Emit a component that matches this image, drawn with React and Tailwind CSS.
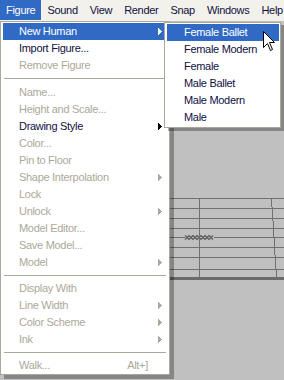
import React from "react";

const DIS = "#ACA899";
const INK = "#10103f";

const mainItems = [
  { label: "New Human", sub: true, active: true },
  { label: "Import Figure..." },
  { label: "Remove Figure", disabled: true },
  { sep: "h-[10px]" },
  { label: "Name...", disabled: true },
  { label: "Height and Scale...", disabled: true },
  { label: "Drawing Style", sub: true },
  { label: "Color...", disabled: true },
  { label: "Pin to Floor", disabled: true },
  { label: "Shape Interpolation", disabled: true, sub: true },
  { label: "Lock", disabled: true },
  { label: "Unlock", disabled: true, sub: true },
  { label: "Model Editor...", disabled: true },
  { label: "Save Model...", disabled: true },
  { label: "Model", disabled: true, sub: true },
  { sep: "h-[9px]" },
  { label: "Display With", disabled: true },
  { label: "Line Width", disabled: true, sub: true },
  { label: "Color Scheme", disabled: true, sub: true },
  { label: "Ink", disabled: true, sub: true },
  { sep: "h-[9px]" },
  { label: "Walk...", disabled: true, shortcut: "Alt+]" },
];

const subItems = ["Female Ballet", "Female Modern", "Female", "Male Ballet", "Male Modern", "Male"];

const menuBar = ["Figure", "Sound", "View", "Render", "Snap", "Windows", "Help"];

function Arrow({ color }) {
  return (
    <svg width="4" height="7" viewBox="0 0 4 7" className="shrink-0" shapeRendering="crispEdges">
      <path d="M0 0h1v1h1v1h1v1h1v1h-1v1h-1v1h-1v1h-1z" fill={color} />
    </svg>
  );
}

function Separator({ h }) {
  return (
    <div className={`${h} flex flex-col pt-[4px]`}>
      <div className="mx-[1px] h-px bg-[#ACA899]" />
    </div>
  );
}

function MainMenu() {
  return (
    <div className="absolute left-0 top-[21px] w-[170px] border border-[#ACA899] bg-white px-[2px] pt-[1px] shadow-[4px_4px_0_rgba(0,0,0,0.3)]">
      {mainItems.map((it, i) => {
        if (it.sep) return <Separator key={i} h={it.sep} />;
        const color = it.active ? "#ffffff" : it.disabled ? DIS : INK;
        return (
          <div
            key={i}
            className={`flex h-[17px] items-center pl-[16px] pr-[5px] ${it.active ? "bg-[#316AC5]" : ""}`}
            style={{ color }}
          >
            <span className="flex-1 whitespace-nowrap">{it.label}</span>
            {it.shortcut && <span className="pr-[14px]">{it.shortcut}</span>}
            {it.sub && <Arrow color={it.active ? "#ffffff" : it.disabled ? DIS : "#000000"} />}
          </div>
        );
      })}
    </div>
  );
}

function SubMenu() {
  return (
    <div className="absolute left-[164px] top-[22px] w-[117px] border border-[#ACA899] bg-white py-[1px] pl-[2px] pr-[1px] shadow-[4px_3px_0_rgba(0,0,0,0.3)]">
      {subItems.map((label, i) => (
        <div
          key={label}
          className={`flex h-[17px] items-center whitespace-nowrap pl-[17px] ${i === 0 ? "bg-[#316AC5] text-white" : "text-[#10103f]"}`}
        >
          {label}
        </div>
      ))}
    </div>
  );
}

function Stage() {
  const rows = [177, 187, 197, 207, 226, 236, 248];
  return (
    <svg width="284" height="359" className="block" shapeRendering="crispEdges">
      {rows.map((y) => (
        <rect key={y} x="170" y={y} width="114" height="1" fill="#707070" />
      ))}
      <rect x="170" y="216" width="15" height="1" fill="#707070" />
      <rect x="214" y="216" width="70" height="1" fill="#707070" />
      <path
        d="M185 214.5 l2 2 l2 -2 l2 2 l2 -2 l2 2 l2 -2 l2 2 l2 -2 l2 2 l2 -2 l2 2 l2 -2 l2 2 l2 -2 M185 218.5 l2 -2 l2 2 l2 -2 l2 2 l2 -2 l2 2 l2 -2 l2 2 l2 -2 l2 2 l2 -2 l2 2 l2 -2 l2 2"
        stroke="#5a5a5a"
        strokeWidth="1.2"
        fill="none"
        shapeRendering="auto"
      />
      <rect x="199" y="177" width="1" height="79" fill="#707070" />
      <path
        d="M271 177h1v9h1v14h1v16h1v18h1v14h1v8h-1v-8h-1v-14h-1v-18h-1v-16h-1v-14h-1z"
        fill="#707070"
      />
      <rect x="170" y="256" width="114" height="3" fill="#6a6a6a" />
    </svg>
  );
}

function Cursor() {
  return (
    <svg width="13" height="21" viewBox="0 0 13 21" className="absolute left-[263px] top-[31px]">
      <path
        d="M0.5 0.5 L0.5 16.5 L4.5 12.5 L7.5 19.5 L9.5 18.5 L6.5 11.5 L11.5 11.5 Z"
        fill="#ffffff"
        stroke="#000000"
        strokeWidth="1"
        strokeLinejoin="miter"
      />
    </svg>
  );
}

export default function App() {
  return (
    <div className="relative h-[380px] w-[284px] overflow-hidden bg-[#C0C0C0] font-['Liberation_Sans',Arial,sans-serif] text-[11px] tracking-[-0.3px]">
      <div className="flex h-[21px] items-start bg-[#F2F1EC]">
        {menuBar.map((m, i) => (
          <div
            key={m}
            className={`flex h-[20px] items-center px-[6px] ${i === 0 ? "bg-[#316AC5] text-white" : "text-[#10103f]"}`}
          >
            {m}
          </div>
        ))}
      </div>
      <Stage />
      <MainMenu />
      <SubMenu />
      <Cursor />
    </div>
  );
}
